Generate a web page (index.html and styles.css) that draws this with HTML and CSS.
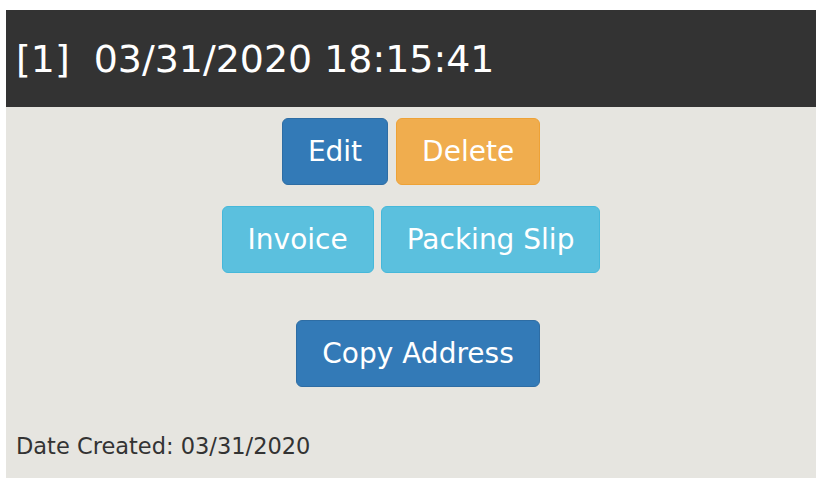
FILE: index.html
```html
<!DOCTYPE html>
<html>
<head>
<meta charset="utf-8">
<link rel="stylesheet" href="styles.css">
</head>
<body>
<div class="card">
  <div class="card-header">[1]&nbsp; 03/31/2020 18:15:41</div>
  <div class="card-body">
    <div class="row row-first">
      <button class="btn btn-primary">Edit</button>
      <button class="btn btn-warning">Delete</button>
    </div>
    <div class="row row-second">
      <button class="btn btn-info">Invoice</button>
      <button class="btn btn-info">Packing Slip</button>
    </div>
    <div class="row row-third">
      <button class="btn btn-primary">Copy Address</button>
    </div>
    <div class="meta">Date Created: 03/31/2020</div>
  </div>
</div>
</body>
</html>
```
FILE: styles.css
```css
html, body {
  background: #ffffff;
}
body {
  margin: 10px 10px 0 6px;
  font-family: "DejaVu Sans", Verdana, sans-serif;
  overflow: hidden;
}
.card {
  display: flex;
  flex-direction: column;
}
.card-header {
  background: #333333;
  color: #ffffff;
  font-size: 37.9px;
  height: 97px;
  display: flex;
  align-items: center;
  padding-left: 10px;
  white-space: pre;
}
.card-body {
  background: #e6e5e0;
  padding: 11px 0 40px 0;
  display: flex;
  flex-direction: column;
}
.row {
  display: flex;
  justify-content: center;
  gap: 8px;
}
.row-second {
  margin-top: 21px;
  gap: 7px;
}
.row-third {
  margin-top: 47px;
  padding-left: 14px;
}
.btn {
  font-family: "DejaVu Sans", Verdana, sans-serif;
  font-size: 28px;
  line-height: 37px;
  padding: 14px 25px;
  border: 1px solid transparent;
  border-radius: 6px;
  color: #ffffff;
  cursor: pointer;
}
.btn-primary {
  background: #337ab7;
  border-color: #2e6da4;
}
.btn-warning {
  background: #f0ad4e;
  border-color: #eea236;
}
.btn-info {
  background: #5bc0de;
  border-color: #46b8da;
}
.meta {
  margin-top: 46px;
  padding-left: 10px;
  font-size: 22.5px;
  color: #333333;
}
```
